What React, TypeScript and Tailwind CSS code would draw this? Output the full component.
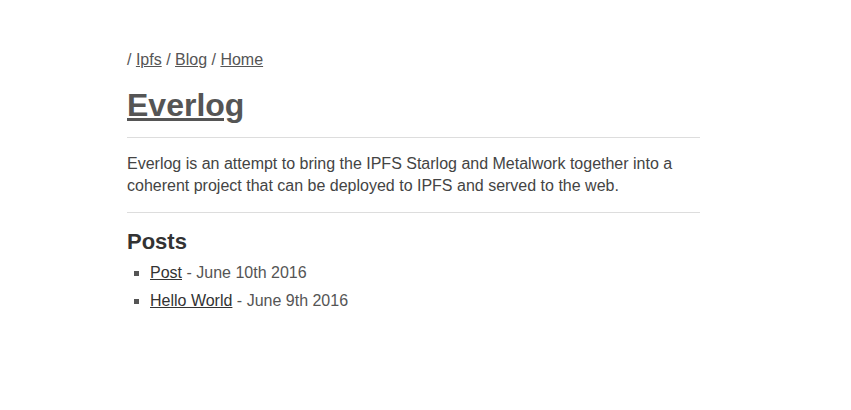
import React from "react";

const posts = [
  { title: "Post", date: "June 10th 2016" },
  { title: "Hello World", date: "June 9th 2016" },
];

function App() {
  return (
    <div className="min-h-screen bg-white font-['Liberation_Sans',Arial,sans-serif] text-[16px] leading-[22px] text-[#444]">
      <div className="w-[573px] ml-[127px] pt-[49px]">
        <nav className="text-[#555]">
          / <a href="#" className="underline">Ipfs</a> /{" "}
          <a href="#" className="underline">Blog</a> /{" "}
          <a href="#" className="underline">Home</a>
        </nav>
        <h1 className="mt-[15px] text-[32px] leading-[38px] font-bold text-[#555]">
          <a href="#" className="underline">Everlog</a>
        </h1>
        <hr className="mt-[13px] border-t border-[#ddd]" />
        <p className="mt-[15px]">
          Everlog is an attempt to bring the IPFS Starlog and Metalwork together
          into a coherent project that can be deployed to IPFS and served to the
          web.
        </p>
        <hr className="mt-[15px] border-t border-[#ddd]" />
        <h2 className="mt-[15px] text-[22px] leading-[28px] font-bold text-[#333]">
          Posts
        </h2>
        <ul className="mt-[3px] list-[square] pl-[23px]">
          {posts.map((p) => (
            <li key={p.title} className="leading-[28px] text-[#555]">
              <a href="#" className="underline text-[#333]">
                {p.title}
              </a>{" "}
              - {p.date}
            </li>
          ))}
        </ul>
      </div>
    </div>
  );
}

export default App;
